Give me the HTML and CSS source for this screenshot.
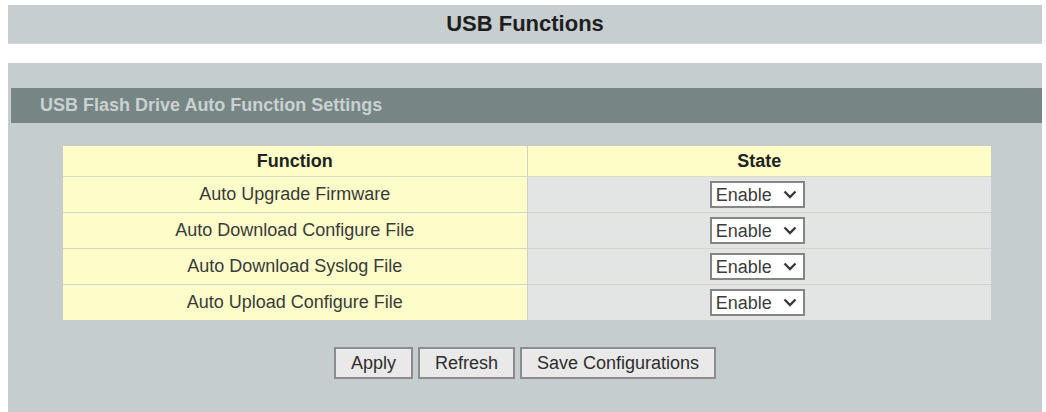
FILE: index.html
```html
<!DOCTYPE html>
<html lang="en">
<head>
    <meta charset="UTF-8">
    <meta name="viewport" content="width=device-width, initial-scale=1.0">
    <title>USB Functions</title>
    <link rel="stylesheet" href="styles.css">
</head>
<body>
    <div class="page">
        <div class="title-bar">USB Functions</div>
        <div class="panel">
            <div class="section-head">USB Flash Drive Auto Function Settings</div>
            <form id="usb-form">
                <table class="settings">
                    <tr>
                        <th>Function</th>
                        <th>State</th>
                    </tr>
                    <tr>
                        <td class="name">Auto Upgrade Firmware</td>
                        <td class="state">
                            <span class="select-wrap">
                                <select name="upgrade">
                                    <option value="1">Enable</option>
                                    <option value="0">Disable</option>
                                </select>
                                <svg class="chevron" viewBox="0 0 14 9"><path d="M1.5 1.5 L7 7 L12.5 1.5" /></svg>
                            </span>
                        </td>
                    </tr>
                    <tr>
                        <td class="name">Auto Download Configure File</td>
                        <td class="state">
                            <span class="select-wrap">
                                <select name="download-config">
                                    <option value="1">Enable</option>
                                    <option value="0">Disable</option>
                                </select>
                                <svg class="chevron" viewBox="0 0 14 9"><path d="M1.5 1.5 L7 7 L12.5 1.5" /></svg>
                            </span>
                        </td>
                    </tr>
                    <tr>
                        <td class="name">Auto Download Syslog File</td>
                        <td class="state">
                            <span class="select-wrap">
                                <select name="download-syslog">
                                    <option value="1">Enable</option>
                                    <option value="0">Disable</option>
                                </select>
                                <svg class="chevron" viewBox="0 0 14 9"><path d="M1.5 1.5 L7 7 L12.5 1.5" /></svg>
                            </span>
                        </td>
                    </tr>
                    <tr>
                        <td class="name">Auto Upload Configure File</td>
                        <td class="state">
                            <span class="select-wrap">
                                <select name="upload-config">
                                    <option value="1">Enable</option>
                                    <option value="0">Disable</option>
                                </select>
                                <svg class="chevron" viewBox="0 0 14 9"><path d="M1.5 1.5 L7 7 L12.5 1.5" /></svg>
                            </span>
                        </td>
                    </tr>
                </table>
                <div class="buttons">
                    <button type="button" class="btn">Apply</button>
                    <button type="button" class="btn">Refresh</button>
                    <button type="button" class="btn">Save Configurations</button>
                </div>
            </form>
        </div>
    </div>
</body>
</html>
```

FILE: styles.css
```css
html, body {
    height: 100%;
}

body {
    margin: 0;
    padding: 0;
    font-family: "Liberation Sans", Arial, sans-serif;
    color: #333;
    background: #fff;
    overflow: hidden;
}

.page {
    display: flex;
    flex-direction: column;
    height: 100%;
    box-sizing: border-box;
    padding: 5px 4px 0 8px;
}

.title-bar {
    height: 38px;
    line-height: 38px;
    background: #c6cecf;
    text-align: center;
    font-size: 22px;
    font-weight: bold;
    color: #1e1e1e;
    border-bottom: 1px solid #d5dbdb;
}

.panel {
    flex: 1;
    margin-top: 19px;
    padding: 25px 0 0 3px;
    background: #c5cdce;
}

.section-head {
    height: 35px;
    line-height: 35px;
    padding-left: 29px;
    background: #778684;
    color: #c9d1d1;
    font-size: 18px;
    font-weight: bold;
}

.settings {
    width: 928px;
    margin: 23px 0 0 52px;
    border-collapse: collapse;
    table-layout: fixed;
    font-size: 18px;
}

.settings th {
    height: 30px;
    padding: 0;
    background: #fdfdc8;
    color: #222;
    font-weight: bold;
    border-bottom: 1px solid #dcdcc2;
}

.settings th + th {
    border-left: 1px solid #d2d2c0;
}

.settings td {
    height: 35px;
    padding: 0;
    text-align: center;
    border-bottom: 1px solid #d4d6cc;
}

.settings tr:last-child td {
    border-bottom: none;
}

.settings .name {
    background: #fdfdc9;
    color: #3a3a3a;
}

.settings .state {
    background: #e3e5e5;
    border-left: 1px solid #d2d2c0;
}

.select-wrap {
    position: relative;
    display: inline-block;
    vertical-align: middle;
    margin-left: -4px;
}

.select-wrap select {
    appearance: none;
    -webkit-appearance: none;
    width: 95px;
    height: 27px;
    padding: 0 0 0 4px;
    border: 2px solid #858585;
    border-radius: 0;
    background: #fff;
    color: #3c3c3c;
    font-family: "Liberation Sans", Arial, sans-serif;
    font-size: 18px;
}

.chevron {
    position: absolute;
    right: 8px;
    top: 9px;
    width: 14px;
    height: 9px;
    pointer-events: none;
}

.chevron path {
    fill: none;
    stroke: #3a3a3a;
    stroke-width: 2.4;
}

.buttons {
    display: flex;
    justify-content: center;
    gap: 5px;
    margin-top: 27px;
    padding-right: 3px;
}

.btn {
    height: 32px;
    padding: 0 15px;
    background: #e9e9e9;
    border: 2px solid #8c8c8c;
    border-radius: 0;
    color: #2e2e2e;
    font-family: "Liberation Sans", Arial, sans-serif;
    font-size: 18px;
    cursor: pointer;
}

.btn:hover {
    background: #f2f2f2;
}
```
